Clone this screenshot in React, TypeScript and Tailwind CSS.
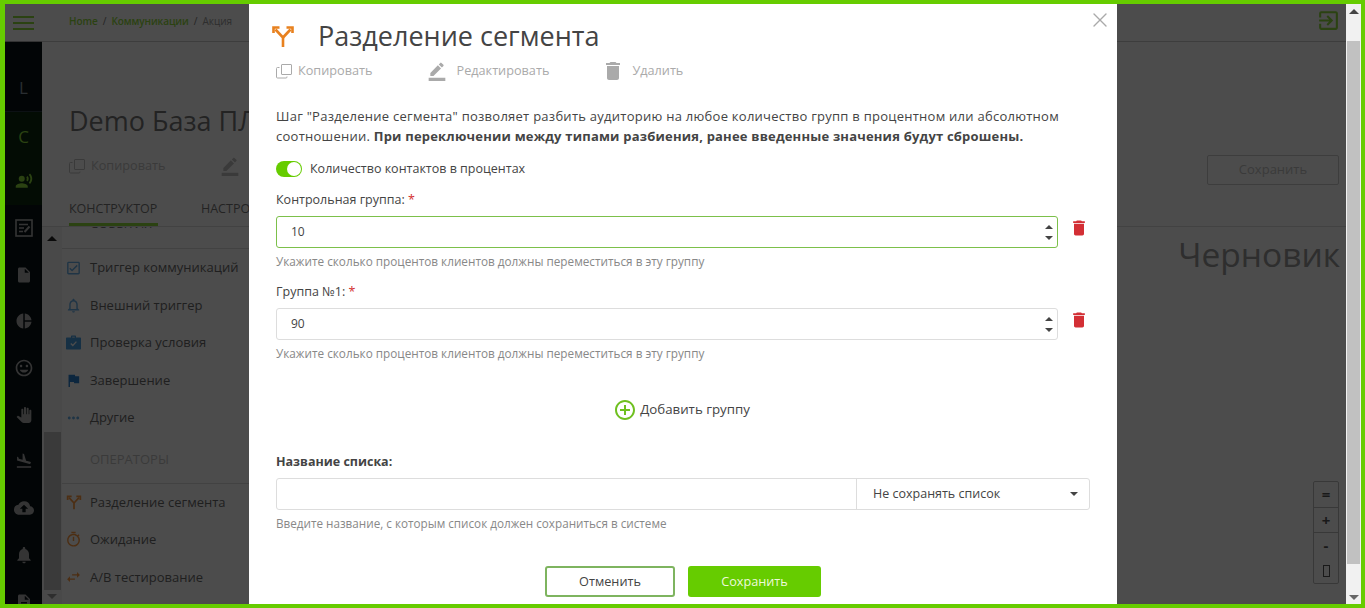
import type { ReactNode } from "react";
import { X } from "lucide-react";
import {
  MdAddCircleOutline, MdBorderColor, MdCloudUpload, MdDelete, MdFlag, MdFlightLand,
  MdInsertDriveFile, MdExitToApp, MdMoreHoriz, MdNotifications, MdNotificationsNone, MdOutlineCheckBox,
  MdPanTool, MdPieChart, MdRecordVoiceOver, MdSwapHoriz, MdTagFaces, MdOutlineTimer,
  MdDescription,
} from "react-icons/md";

const hint = "Укажите сколько процентов клиентов должны переместиться в эту группу";

function SplitIcon({ size, className = "" }: { size: number; className?: string }) {
  return (
    <svg width={size} height={size} viewBox="0 0 24 24" fill="none" stroke="currentColor" strokeWidth="2.6" className={className}>
      <path d="M12 23V13.5L4.5 5.5" />
      <path d="M12 13.5L19.5 5.5" />
      <path d="M2.5 9V3.5H8.5" />
      <path d="M21.5 9V3.5H15.5" />
    </svg>
  );
}

function CopyIcon({ size, className = "" }: { size: number; className?: string }) {
  return (
    <svg width={size} height={size} viewBox="0 0 16 16" fill="none" stroke="currentColor" strokeWidth="1" className={className}>
      <rect x="5.5" y="1.5" width="10" height="10" rx="0.5" />
      <path d="M3.5 4.5H1.5a1 1 0 0 0-1 1V14a1 1 0 0 0 1 1H10a1 1 0 0 0 1-1V13.5" />
    </svg>
  );
}

function FormIcon() {
  return (
    <svg width="18" height="18" viewBox="0 0 18 18" fill="none" stroke="currentColor" strokeWidth="1.6">
      <rect x="1" y="1" width="16" height="16" />
      <path d="M4 5.5H13M4 9H9M4 12.5H8" />
      <path d="M9.5 13L14.5 7.5" strokeWidth="2" />
    </svg>
  );
}

function BriefcaseCheckIcon({ className = "" }: { className?: string }) {
  return (
    <svg width="15" height="15" viewBox="0 0 15 15" className={className}>
      <path fill="currentColor" d="M5 2.5V1.5C5 .9 5.4.5 6 .5H9C9.6.5 10 .9 10 1.5V2.5H14C14.6 2.5 15 2.9 15 3.5V13.5C15 14.1 14.6 14.5 14 14.5H1C.4 14.5 0 14.1 0 13.5V3.5C0 2.9.4 2.5 1 2.5ZM6.2 2.5H8.8V1.7H6.2Z" />
      <path fill="none" stroke="white" strokeWidth="1.3" d="M4.8 8.5L6.8 10.5L10.4 6.6" />
    </svg>
  );
}

function SideItem({ children, className = "" }: { children: ReactNode; className?: string }) {
  return <div className={`flex h-[46.7px] shrink-0 items-center justify-center text-[#b0b0b0] ${className}`}>{children}</div>;
}

function Sidebar() {
  return (
    <div className="flex h-full w-[37px] shrink-0 flex-col overflow-hidden bg-[#081216]">
      <div className="flex h-[38px] shrink-0 flex-col items-center justify-center gap-[4px] border-b border-[#aaa] bg-white">
        <span className="h-[2px] w-[21px] bg-[#8fdc3c]" />
        <span className="h-[2px] w-[21px] bg-[#8fdc3c]" />
        <span className="h-[2px] w-[21px] bg-[#8fdc3c]" />
      </div>
      <div className="flex h-[70px] shrink-0 items-center justify-center border-b border-[#2a3a44] pt-[22px] text-[17px] text-[#8a9aa3]">L</div>
      <div className="flex h-[46px] shrink-0 items-center justify-center bg-[#0a2a10] pt-[3px] text-[17px] text-[#8fdc3c]">C</div>
      <SideItem className="bg-[#0a2a10]"><MdRecordVoiceOver size={18} className="text-[#8fdc3c]" /></SideItem>
      <SideItem><FormIcon /></SideItem>
      <SideItem><MdInsertDriveFile size={18} /></SideItem>
      <SideItem><MdPieChart size={18} /></SideItem>
      <SideItem><MdTagFaces size={20} /></SideItem>
      <SideItem><MdPanTool size={16} /></SideItem>
      <SideItem><MdFlightLand size={18} /></SideItem>
      <SideItem><MdCloudUpload size={20} /></SideItem>
      <SideItem><MdNotifications size={20} /></SideItem>
      <SideItem><MdDescription size={18} /></SideItem>
    </div>
  );
}

function PaletteItem({ icon, label }: { icon: ReactNode; label: string }) {
  return (
    <div className="flex h-[37.5px] items-center gap-[8px] pl-[3px] text-[13px] text-[#6a6a6a]">
      <span className="flex w-[17px] justify-center">{icon}</span>
      {label}
    </div>
  );
}

function Palette() {
  return (
    <div className="flex h-full w-[207px] shrink-0">
      <div className="flex w-[20px] shrink-0 flex-col bg-[#f4f4f4] pt-[9px]">
        <span className="mx-auto h-0 w-0 border-x-[5px] border-b-[5px] border-x-transparent border-b-[#222]" />
        <div className="mx-auto mt-[191px] h-[158px] w-[17px] bg-[#c1c1c1]" />
        <span className="mx-auto mt-[4px] h-0 w-0 border-x-[5px] border-t-[5px] border-x-transparent border-t-[#999]" />
      </div>
      <div className="flex-1">
        <div className="h-[22px] overflow-hidden border-b border-[#ddd] pl-[28px] text-[13px] text-[#777]">
          <span className="-mt-[13px] block">СОБЫТИЯ</span>
        </div>
        <PaletteItem icon={<MdOutlineCheckBox size={18} className="text-[#68b0e8]" />} label="Триггер коммуникаций" />
        <PaletteItem icon={<MdNotificationsNone size={19} className="text-[#68b0e8]" />} label="Внешний триггер" />
        <PaletteItem icon={<BriefcaseCheckIcon className="text-[#4aa0e4]" />} label="Проверка условия" />
        <PaletteItem icon={<MdFlag size={21} className="text-[#2a80d0]" />} label="Завершение" />
        <PaletteItem icon={<MdMoreHoriz size={18} className="text-[#68b0e8]" />} label="Другие" />
        <div className="flex h-[47px] items-end border-b border-[#ddd] pb-[13px] pl-[28px] text-[13px] text-[#c4c4c4]">ОПЕРАТОРЫ</div>
        <PaletteItem icon={<SplitIcon size={16} className="text-[#ff9a40]" />} label="Разделение сегмента" />
        <PaletteItem icon={<MdOutlineTimer size={19} className="text-[#ff9a40]" />} label="Ожидание" />
        <PaletteItem icon={<MdSwapHoriz size={18} className="text-[#ff9a40]" />} label="A/B тестирование" />
      </div>
    </div>
  );
}

function ZoomControls() {
  return (
    <div className="absolute right-[7px] top-[477px] flex w-[26px] flex-col items-center rounded-[2px] border border-[#bbb] text-[#555]">
      <span className="flex h-[26px] w-full items-center justify-center border-b border-[#bbb] text-[15px] font-bold">=</span>
      <span className="flex h-[25px] w-full items-center justify-center border-b border-[#bbb] text-[15px] font-bold">+</span>
      <span className="flex h-[25px] items-center justify-center text-[15px] font-bold">-</span>
      <span className="flex h-[25px] items-center justify-center"><span className="h-[12px] w-[7px] border border-[#555]" /></span>
    </div>
  );
}

function Background() {
  return (
    <div className="flex h-full bg-white">
      <Sidebar />
      <div className="flex min-w-0 flex-1 flex-col">
        <div className="flex h-[38px] shrink-0 items-center justify-between border-b border-[#ccc] pl-[27px] pr-[5px] text-[10px]">
          <div className="flex items-center gap-[5px] pb-[3px]">
            <span className="font-semibold tracking-[-0.05px] text-[#8fdc3c]">Home</span>
            <span className="text-[#777]">/</span>
            <span className="font-semibold tracking-[-0.1px] text-[#8fdc3c]">Коммуникации</span>
            <span className="text-[#777]">/</span>
            <span className="text-[#999]">Акция</span>
          </div>
          <MdExitToApp size={25} className="mb-[5px] text-[#8fdc3c]" />
        </div>
        <div className="flex h-[185px] shrink-0 flex-col border-b border-[#ddd] pl-[27px] pr-[7px]">
          <h1 className="mt-[59px] text-[27px] leading-[40px] text-[#777]">Demo База ПЛ</h1>
          <div className="mt-[14px] flex items-center justify-between">
            <div className="flex items-center pb-[8px] text-[12.7px] text-[#c4c4c4]">
              <CopyIcon size={16} />
              <span className="ml-[6px]">Копировать</span>
              <MdBorderColor size={20} className="ml-[54px]" />
            </div>
            <span className="flex h-[30px] w-[132px] items-center justify-center rounded-[2px] border border-[#ccc] text-[13px] text-[#c4c4c4]">Сохранить</span>
          </div>
          <div className="mt-auto flex text-[12.5px] text-[#777]">
            <span className="h-[33px] w-[89px] border-b-[3px] border-[#8fdc3c] pt-[7px]">КОНСТРУКТОР</span>
            <span className="ml-[43px] pt-[7px]">НАСТРОЙКИ</span>
          </div>
        </div>
        <div className="flex min-h-0 flex-1">
          <Palette />
          <div className="flex flex-1 justify-end pr-[6px] pt-[2px]">
            <span className="text-[33.5px] leading-[50px] text-[#999]">Черновик</span>
          </div>
        </div>
      </div>
    </div>
  );
}

function NumberField({ value, focused }: { value: string; focused?: boolean }) {
  return (
    <div className={`flex h-[32px] w-[782px] items-center justify-between rounded-[3px] border pl-[14px] pr-[4px] text-[12px] ${focused ? "border-[#7cc04a]" : "border-[#ddd]"}`}>
      {value}
      <span className="flex flex-col gap-[7px]">
        <span className="h-0 w-0 border-x-[4px] border-b-[4px] border-x-transparent border-b-[#444]" />
        <span className="h-0 w-0 border-x-[4px] border-t-[4px] border-x-transparent border-t-[#444]" />
      </span>
    </div>
  );
}

function GroupField({ label, value, focused, className = "" }: { label: string; value: string; focused?: boolean; className?: string }) {
  return (
    <div className={className}>
      <div className="h-[17px] text-[12.5px] leading-[17px]">
        {label} <span className="text-[#d32f2f]">*</span>
      </div>
      <div className="mt-[8px] flex items-start">
        <NumberField value={value} focused={focused} />
        <MdDelete size={20} className="ml-[11px] mt-[2px] text-[#d32f35]" />
      </div>
      <p className="mt-[5px] text-[11.75px] leading-[16px] text-[#888]">{hint}</p>
    </div>
  );
}

function Modal() {
  return (
    <div className="absolute bottom-0 left-[244px] top-0 w-[868px] bg-white px-[27px] font-['Open_Sans',sans-serif] text-[#444]">
      <X size={24} strokeWidth={1.4} className="absolute right-[5px] top-[4px] text-[#aaa]" />
      <div className="flex h-[50px] items-center pt-[13px]">
        <SplitIcon size={24} className="-ml-[5px] text-[#e8811f]" />
        <h2 className="ml-[23px] text-[27px] leading-[34px]">Разделение сегмента</h2>
      </div>
      <div className="mt-[5px] flex h-[24px] items-center text-[12.7px] text-[#aaa]">
        <CopyIcon size={16} />
        <span className="ml-[6px]">Копировать</span>
        <MdBorderColor size={20} className="ml-[54px]" />
        <span className="ml-[10px]">Редактировать</span>
        <MdDelete size={24} className="ml-[52px]" />
        <span className="ml-[7px]">Удалить</span>
      </div>
      <p className="mt-[23px] text-[13px] leading-[20px] tracking-[0.2px]">
        <span className="tracking-[0.26px]">
          Шаг "Разделение сегмента" позволяет разбить аудиторию на любое количество групп в процентном или абсолютном
          соотношении.
        </span>{" "}
        <b>При переключении между типами разбиения, ранее введенные значения будут сброшены.</b>
      </p>
      <div className="mt-[14px] flex h-[18px] items-center gap-[8px] text-[12.5px]">
        <span className="flex h-[16px] w-[26px] justify-end rounded-full bg-[#66cc00] p-[1px]">
          <span className="h-[14px] w-[14px] rounded-full bg-white" />
        </span>
        Количество контактов в процентах
      </div>
      <GroupField className="mt-[13px]" label="Контрольная группа:" value="10" focused />
      <GroupField className="mt-[14px]" label="Группа №1:" value="90" />
      <div className="mt-[37px] flex items-center justify-center gap-[3px] pr-[3px] text-[13.3px]">
        <MdAddCircleOutline size={24} className="text-[#6fc020]" />
        Добавить группу
      </div>
      <div className="mt-[31px] text-[12.5px] font-bold leading-[17px]">Название списка:</div>
      <div className="mt-[8px] flex h-[32px] w-[814px] rounded-[3px] border border-[#ddd] text-[12.5px]">
        <div className="w-[580px] border-r border-[#ddd]" />
        <div className="flex flex-1 items-center justify-between pl-[16px] pr-[11px]">
          Не сохранять список
          <span className="h-0 w-0 border-x-[4px] border-t-[4px] border-x-transparent border-t-[#444]" />
        </div>
      </div>
      <p className="mt-[5px] text-[11.7px] leading-[16px] text-[#888]">Введите название, с которым список должен сохраниться в системе</p>
      <div className="mt-[35px] flex justify-center gap-[13px] text-[12.7px]">
        <button className="h-[31px] w-[130px] rounded-[3px] border-2 border-[#7eb45f]">Отменить</button>
        <button className="h-[31px] w-[133px] rounded-[3px] bg-[#66cc00] text-[#eef9dc]">Сохранить</button>
      </div>
    </div>
  );
}

function PageScrollbar() {
  return (
    <div className="flex w-[15px] shrink-0 flex-col items-center bg-[#f1f1f1]">
      <div className="flex h-[37px] w-full justify-center pt-[5px]">
        <span className="h-0 w-0 border-x-[5px] border-b-[5px] border-x-transparent border-b-[#444]" />
      </div>
      <div className="h-[523px] w-[13px] bg-[#c1c1c1]" />
      <span className="mt-[31px] h-0 w-0 border-x-[5px] border-t-[5px] border-x-transparent border-t-[#666]" />
    </div>
  );
}

export default function App() {
  return (
    <div className="flex h-[608px] w-[1365px] overflow-hidden border-y-[4px] border-l-[5px] border-r-[4px] border-[#66cc00] font-['Open_Sans',sans-serif]">
      <div className="relative min-w-0 flex-1">
        <Background />
        <ZoomControls />
        <div className="absolute inset-0 bg-black/70" />
        <Modal />
      </div>
      <PageScrollbar />
    </div>
  );
}
